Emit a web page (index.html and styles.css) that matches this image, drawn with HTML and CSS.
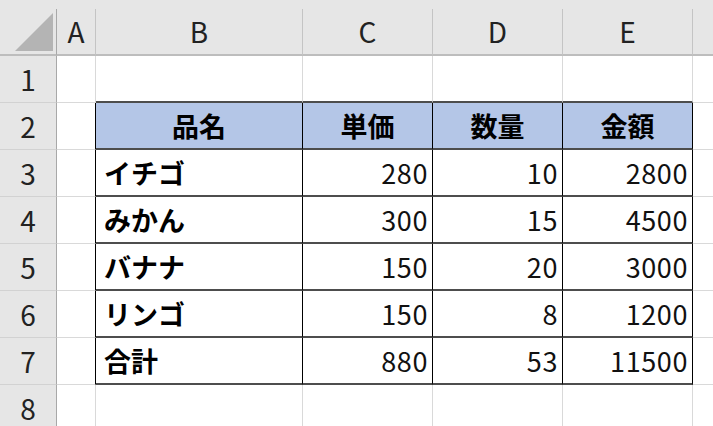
FILE: index.html
```html
<!DOCTYPE html>
<html lang="ja">
<head>
<meta charset="utf-8">
<link rel="stylesheet" href="styles.css">
</head>
<body>
<div class="sheet">
  <div class="strip"></div>
  <div class="grid">
    <div class="ch corner"><span class="tri"></span></div>
    <div class="ch">A</div>
    <div class="ch">B</div>
    <div class="ch">C</div>
    <div class="ch">D</div>
    <div class="ch">E</div>
    <div class="ch last"></div>

    <div class="rh">1</div>
    <div class="c"></div>
    <div class="c tb"></div>
    <div class="c tb"></div>
    <div class="c tb"></div>
    <div class="c tb"></div>
    <div class="c last"></div>

    <div class="rh">2</div>
    <div class="c tl"></div>
    <div class="c t hd">品名</div>
    <div class="c t hd">単価</div>
    <div class="c t hd">数量</div>
    <div class="c t hd">金額</div>
    <div class="c last"></div>

    <div class="rh">3</div>
    <div class="c tl"></div>
    <div class="c t nm">イチゴ</div>
    <div class="c t num">280</div>
    <div class="c t num">10</div>
    <div class="c t num">2800</div>
    <div class="c last"></div>

    <div class="rh">4</div>
    <div class="c tl"></div>
    <div class="c t nm">みかん</div>
    <div class="c t num">300</div>
    <div class="c t num">15</div>
    <div class="c t num">4500</div>
    <div class="c last"></div>

    <div class="rh">5</div>
    <div class="c tl"></div>
    <div class="c t nm">バナナ</div>
    <div class="c t num">150</div>
    <div class="c t num">20</div>
    <div class="c t num">3000</div>
    <div class="c last"></div>

    <div class="rh">6</div>
    <div class="c tl"></div>
    <div class="c t nm">リンゴ</div>
    <div class="c t num">150</div>
    <div class="c t num">8</div>
    <div class="c t num">1200</div>
    <div class="c last"></div>

    <div class="rh">7</div>
    <div class="c tl"></div>
    <div class="c t nm">合計</div>
    <div class="c t num">880</div>
    <div class="c t num">53</div>
    <div class="c t num">11500</div>
    <div class="c last"></div>

    <div class="rh">8</div>
    <div class="c"></div>
    <div class="c"></div>
    <div class="c"></div>
    <div class="c"></div>
    <div class="c"></div>
    <div class="c last"></div>
  </div>
</div>
</body>
</html>
```
FILE: styles.css
```css
html, body {
  margin: 0;
  padding: 0;
  background: #ffffff;
  overflow: hidden;
}
.sheet {
  width: 713px;
  height: 426px;
  overflow: hidden;
  font-family: "Noto Sans CJK JP", "Noto Sans", sans-serif;
  font-size: 27px;
  color: #000;
}
.strip {
  height: 9px;
  background: #e6e6e6;
}
.grid {
  display: grid;
  grid-template-columns: 57px 39px 207px 130px 130px 130px 1fr;
  grid-template-rows: 47px repeat(8, 47px);
}
.grid > div {
  box-sizing: border-box;
  display: flex;
  align-items: center;
  min-width: 0;
}
.ch {
  background: #e6e6e6;
  border-right: 1px solid #c4c4c4;
  border-bottom: 2px solid #bdbdbd;
  justify-content: center;
  color: #222;
  padding-bottom: 2px;
  font-size: 28px;
}
.ch.corner {
  border-right: 1px solid #a8a8a8;
  position: relative;
}
.tri {
  position: absolute;
  left: 15px;
  top: 4px;
  width: 38px;
  height: 38px;
  background: #b4b4b4;
  clip-path: polygon(100% 0, 100% 100%, 0 100%);
}
.ch.last { border-right: none; }
.rh {
  background: #e6e6e6;
  border-right: 1px solid #a8a8a8;
  border-bottom: 1px solid #d2d2d2;
  justify-content: center;
  color: #222;
  font-size: 28px;
}
.c {
  border-right: 1px solid #d9d9d9;
  border-bottom: 1px solid #d9d9d9;
}
.c.last { border-right: none; }
.c.tb { border-bottom: 2px solid #4d4d4d; }
.c.tl { border-right: 1px solid #000; }
.c.t {
  border-right: 1px solid #000;
  border-bottom: 2px solid #4d4d4d;
}
.hd {
  background: #b4c6e7;
  justify-content: center;
  font-weight: 700;
}
.nm {
  font-weight: 700;
  padding-left: 8px;
}
.num {
  justify-content: flex-end;
  padding-right: 4px;
  font-weight: 400;
  color: #111;
  letter-spacing: 0.6px;
}
```
